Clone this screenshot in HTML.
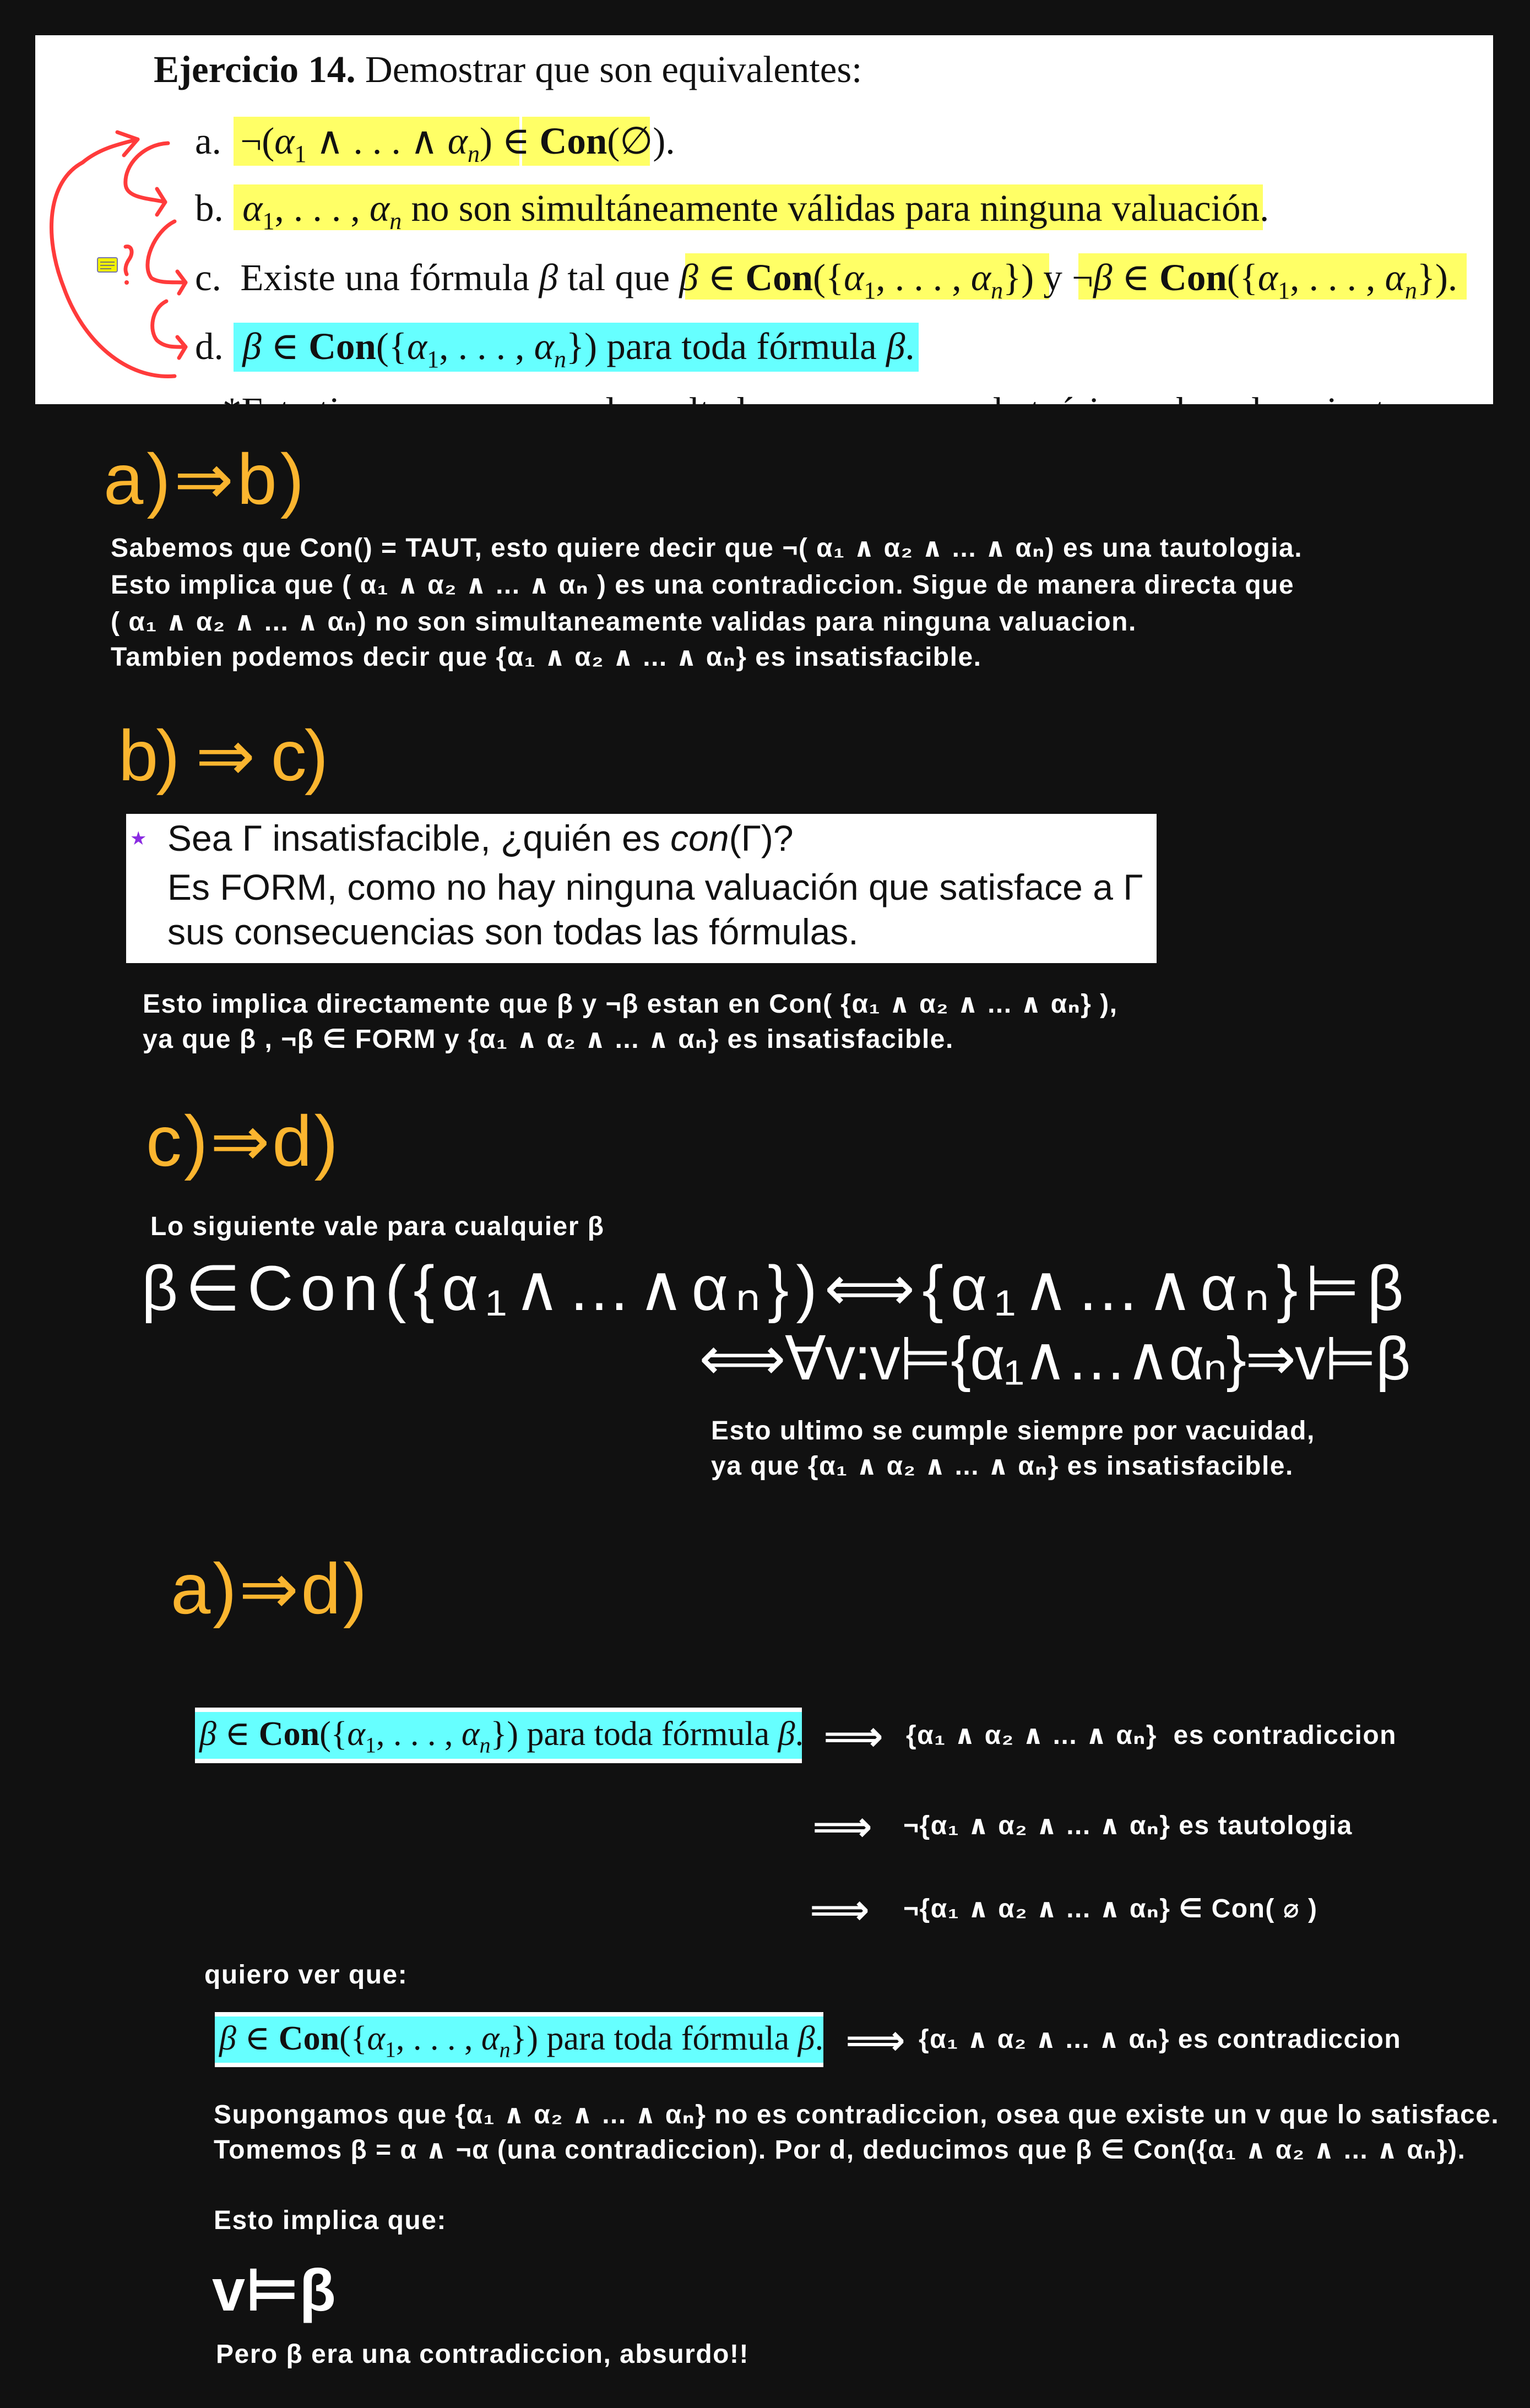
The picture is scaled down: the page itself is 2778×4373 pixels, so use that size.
<!DOCTYPE html>
<html><head><meta charset="utf-8">
<style>
body{margin:0;background:#111111;width:2778px;height:4373px;position:relative;overflow:hidden;font-family:"Liberation Sans","DejaVu Sans",sans-serif;}
.t{position:absolute;white-space:nowrap;line-height:1;}
.w{color:#fff;font-weight:bold;font-size:48px;letter-spacing:1.5px;}
.y{color:#fbb52f;font-size:130px;}
.s{font-family:"Liberation Serif","DejaVu Serif",serif;color:#111;font-size:69px;}
.s sub{font-size:44px;}
.hl{position:absolute;}
.big{color:#fff;font-size:115px;}
</style></head><body>

<div style="position:absolute;left:64px;top:64px;width:2647px;height:670px;background:#fff;overflow:hidden;">
  <div class="hl" style="left:360px;top:148px;width:519px;height:89px;background:#ffff66"></div>
  <div class="hl" style="left:884px;top:148px;width:232px;height:89px;background:#ffff66"></div>
  <div class="hl" style="left:360px;top:271px;width:1869px;height:83px;background:#ffff66"></div>
  <div class="hl" style="left:1180px;top:396px;width:661px;height:84px;background:#ffff66"></div>
  <div class="hl" style="left:1894px;top:396px;width:705px;height:84px;background:#ffff66"></div>
  <div class="hl" style="left:360px;top:522px;width:1244px;height:89px;background:#66ffff"></div>
  <div class="t s" style="left:215px;top:28px;"><b>Ejercicio 14.</b> Demostrar que son equivalentes:</div>
  <div class="t s" style="left:290px;top:158px;">a.&nbsp; ¬(<i>α</i><sub>1</sub> ∧ . . . ∧ <i>α<sub>n</sub></i>) ∈ <b>Con</b>(∅).</div>
  <div class="t s" style="left:290px;top:280px;">b.&nbsp; <i>α</i><sub>1</sub>, . . . , <i>α<sub>n</sub></i> no son simultáneamente válidas para ninguna valuación.</div>
  <div class="t s" style="left:290px;top:406px;">c.&nbsp; Existe una fórmula <i>β</i> tal que <i>β</i> ∈ <b>Con</b>({<i>α</i><sub>1</sub>, . . . , <i>α<sub>n</sub></i>}) y ¬<i>β</i> ∈ <b>Con</b>({<i>α</i><sub>1</sub>, . . . , <i>α<sub>n</sub></i>}).</div>
  <div class="t s" style="left:290px;top:531px;">d.&nbsp; <i>β</i> ∈ <b>Con</b>({<i>α</i><sub>1</sub>, . . . , <i>α<sub>n</sub></i>}) para toda fórmula <i>β</i>.</div>
  <div class="t s" style="left:340px;top:648px;">*Esto tiene que ver con el resultado que vemos en la teórica sobre el conjunto</div>
</div>
<svg style="position:absolute;left:0;top:0" width="2778" height="760">
 <g fill="none" stroke="#ff3b3b" stroke-width="7" stroke-linecap="round" stroke-linejoin="round">
  <path d="M317,683 C230,690 150,620 115,520 C80,430 85,330 150,295 C180,270 215,262 250,253"/>
  <path d="M213,240 L250,253 L225,282"/>
  <path d="M305,260 C260,262 225,300 228,335 C230,360 270,360 300,367"/>
  <path d="M285,343 L300,367 L285,390"/>
  <path d="M317,402 C280,420 255,480 275,505 C290,515 315,512 337,513"/>
  <path d="M322,493 L337,513 L325,533"/>
  <path d="M302,547 C275,560 270,600 285,618 C300,632 320,630 337,630"/>
  <path d="M322,612 L337,630 L325,650"/>
  <path d="M228,448 C240,445 242,460 235,470 C228,480 226,490 230,498"/>
 </g>
 <circle cx="230" cy="513" r="4" fill="#ff3b3b"/>
 <rect x="177" y="468" width="36" height="26" rx="3" fill="#f2f200" stroke="#7777aa" stroke-width="2"/>
 <path d="M182,476h26M182,482h26M182,488h20" stroke="#777" stroke-width="2"/>
</svg>

<div class="t y" style="left:188px;top:805px;letter-spacing:6px;">a)⇒b)</div>
<div class="t w" style="left:201px;top:972px;">Sabemos que Con() = TAUT, esto quiere decir que ¬( α₁ ∧ α₂ ∧ ... ∧ αₙ) es una tautologia.</div>
<div class="t w" style="left:201px;top:1039px;">Esto implica que ( α₁ ∧ α₂ ∧ ... ∧ αₙ ) es una contradiccion. Sigue de manera directa que</div>
<div class="t w" style="left:201px;top:1106px;">( α₁ ∧ α₂ ∧ ... ∧ αₙ) no son simultaneamente validas para ninguna valuacion.</div>
<div class="t w" style="left:201px;top:1170px;">Tambien podemos decir que {α₁ ∧ α₂ ∧ ... ∧ αₙ} es insatisfacible.</div>

<div class="t y" style="left:215px;top:1307px;letter-spacing:-4px;">b) ⇒ c)</div>
<div style="position:absolute;left:229px;top:1478px;width:1871px;height:271px;background:#fff;"></div>
<div class="t" style="left:236px;top:1506px;font-size:34px;color:#8a2be2;">★</div>
<div class="t" style="left:304px;top:1489px;font-size:66px;color:#111;">Sea Γ insatisfacible, ¿quién es <i>con</i>(Γ)?</div>
<div class="t" style="left:304px;top:1578px;font-size:66px;color:#111;">Es FORM, como no hay ninguna valuación que satisface a Γ</div>
<div class="t" style="left:304px;top:1659px;font-size:66px;color:#111;">sus consecuencias son todas las fórmulas.</div>
<div class="t w" style="left:259px;top:1800px;">Esto implica directamente que β y ¬β estan en Con( {α₁ ∧ α₂ ∧ ... ∧ αₙ} ),</div>
<div class="t w" style="left:259px;top:1864px;">ya que β , ¬β ∈ FORM y {α₁ ∧ α₂ ∧ ... ∧ αₙ} es insatisfacible.</div>

<div class="t y" style="left:265px;top:2007px;letter-spacing:4px;">c)⇒d)</div>
<div class="t w" style="left:273px;top:2204px;">Lo siguiente vale para cualquier β</div>
<div class="t big" style="left:257px;top:2283px;letter-spacing:13px;">β∈Con({α₁∧…∧αₙ})⟺{α₁∧…∧αₙ}⊨β</div>
<div class="t big" style="left:1269px;top:2413px;font-size:110px;letter-spacing:-2px;">⟺∀v:v⊨{α₁∧…∧αₙ}⇒v⊨β</div>
<div class="t w" style="left:1291px;top:2575px;">Esto ultimo se cumple siempre por vacuidad,</div>
<div class="t w" style="left:1291px;top:2639px;">ya que {α₁ ∧ α₂ ∧ ... ∧ αₙ} es insatisfacible.</div>

<div class="t y" style="left:310px;top:2820px;letter-spacing:4px;">a)⇒d)</div>
<div style="position:absolute;left:354px;top:3101px;width:1102px;height:101px;background:#66ffff;border-top:8px solid #fff;border-bottom:8px solid #fff;box-sizing:border-box;"></div>
<div class="t s" style="left:362px;top:3118px;font-size:62px;"><i>β</i> ∈ <b>Con</b>({<i>α</i><sub style="font-size:40px">1</sub>, . . . , <i>α<sub style="font-size:40px">n</sub></i>}) para toda fórmula <i>β</i>.</div>
<div class="t w" style="left:1495px;top:3116px;font-size:76px;letter-spacing:0;">⟹</div>
<div class="t w" style="left:1645px;top:3128px;">{α₁ ∧ α₂ ∧ ... ∧ αₙ}&nbsp; es contradiccion</div>
<div class="t w" style="left:1475px;top:3280px;font-size:76px;letter-spacing:0;">⟹</div>
<div class="t w" style="left:1640px;top:3292px;">¬{α₁ ∧ α₂ ∧ ... ∧ αₙ} es tautologia</div>
<div class="t w" style="left:1470px;top:3431px;font-size:76px;letter-spacing:0;">⟹</div>
<div class="t w" style="left:1640px;top:3443px;">¬{α₁ ∧ α₂ ∧ ... ∧ αₙ} ∈ Con( ⌀ )</div>
<div class="t w" style="left:371px;top:3563px;">quiero ver que:</div>
<div style="position:absolute;left:390px;top:3654px;width:1105px;height:100px;background:#66ffff;border-top:8px solid #fff;border-bottom:8px solid #fff;box-sizing:border-box;"></div>
<div class="t s" style="left:398px;top:3671px;font-size:62px;"><i>β</i> ∈ <b>Con</b>({<i>α</i><sub style="font-size:40px">1</sub>, . . . , <i>α<sub style="font-size:40px">n</sub></i>}) para toda fórmula <i>β</i>.</div>
<div class="t w" style="left:1535px;top:3668px;font-size:76px;letter-spacing:0;">⟹</div>
<div class="t w" style="left:1668px;top:3680px;">{α₁ ∧ α₂ ∧ ... ∧ αₙ} es contradiccion</div>
<div class="t w" style="left:388px;top:3817px;">Supongamos que {α₁ ∧ α₂ ∧ ... ∧ αₙ} no es contradiccion, osea que existe un v que lo satisface.</div>
<div class="t w" style="left:388px;top:3881px;">Tomemos β = α ∧ ¬α (una contradiccion). Por d, deducimos que β ∈ Con({α₁ ∧ α₂ ∧ ... ∧ αₙ}).</div>
<div class="t w" style="left:388px;top:4009px;">Esto implica que:</div>
<div class="t" style="left:385px;top:4105px;font-size:108px;color:#fff;font-weight:bold;">v⊨β</div>
<div class="t w" style="left:392px;top:4252px;">Pero β era una contradiccion, absurdo!!</div>
</body></html>
